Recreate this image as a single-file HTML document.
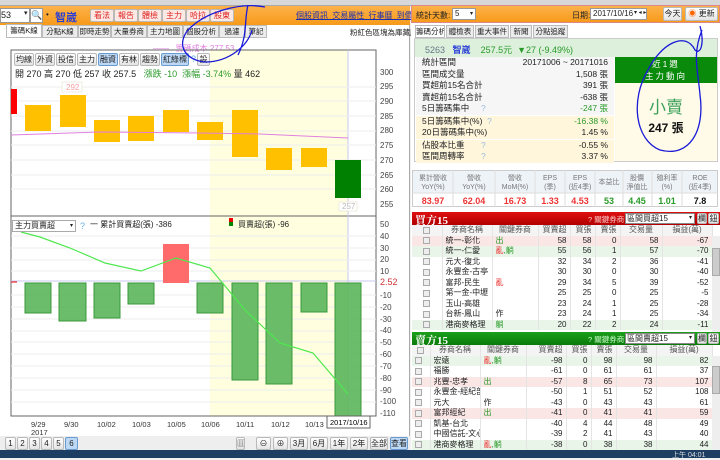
<!DOCTYPE html>
<html><head><meta charset="utf-8"><style>
*{margin:0;padding:0;box-sizing:border-box}
body{width:720px;height:458px;overflow:hidden;background:#f0f0f0;font-family:"Liberation Sans","Noto Sans CJK TC",sans-serif;font-size:9px;color:#222;position:relative}
.a{position:absolute;white-space:nowrap}
.btn{position:absolute;height:13px;border:1px solid #b9b9b9;background:linear-gradient(#fff,#e4e4e4);font-size:8px;line-height:11px;text-align:center;border-radius:2px;white-space:nowrap;overflow:hidden}
.tab{position:absolute;top:25px;height:13px;border:1px solid #bbb;background:#ececec;font-size:7.5px;line-height:11px;text-align:center;white-space:nowrap;overflow:hidden}
table{border-collapse:collapse}
.t td{height:10.5px;font-size:8px;line-height:10px;padding:0 3px;border-right:1px solid #e4e4e4;overflow:hidden;white-space:nowrap}
.r{text-align:right}
.cb{display:inline-block;width:7px;height:7px;border:1px solid #aaa;background:#eee;vertical-align:middle}
.g{color:#2a9a2a}.rd{color:#e33}
</style></head><body>
<div class="a" style="left:0;top:0;width:720px;height:6px;background:#d8d8d8;border-bottom:1px solid #aaa"></div>
<div class="a" style="left:0;top:6px;width:410px;height:19px;background:linear-gradient(#fdb24a,#f79a1a)"></div>
<div class="a" style="left:0;top:8px;width:30px;height:15px;background:#fff;border:1px solid #999;font-size:9px;line-height:13px">53</div>
<div class="a" style="left:24px;top:9px;font-size:7px">▾</div>
<div class="a" style="left:30px;top:8px;width:13px;height:15px;background:#fff;border:1px solid #999;font-size:9px;line-height:13px;text-align:center">🔍</div>
<div class="a" style="left:46px;top:10px;font-size:8px">•</div>
<div class="a" style="left:55px;top:9px;font-size:11px;font-weight:bold;color:#2a3fd6">智崴</div>
<div class="btn" style="left:90px;top:9px;width:24px;color:#d22;background:#fde9e4">看法</div>
<div class="btn" style="left:114px;top:9px;width:24px;color:#d22;background:#fde9e4">報告</div>
<div class="btn" style="left:138px;top:9px;width:24px;color:#d22;background:#fde9e4">體檢</div>
<div class="btn" style="left:162px;top:9px;width:24px;color:#d22;background:#fde9e4">主力</div>
<div class="btn" style="left:186px;top:9px;width:24px;color:#d22;background:#fde9e4">哈拉</div>
<div class="btn" style="left:210px;top:9px;width:24px;color:#d22;background:#fde9e4">股東</div>
<div class="a" style="left:296px;top:10px;font-size:8px;color:#1c2fb0;text-decoration:underline;word-spacing:2px">個股資訊 交易屬性 行事曆 到價通知</div>
<div class="a" style="left:0;top:25px;width:410px;height:425px;background:#fff;border-right:1px solid #aaa"></div>
<div class="tab" style="left:6px;width:36px;background:#fff;top:24px;height:14px">籌碼K線</div>
<div class="tab" style="left:42px;width:36px">分點K線</div>
<div class="tab" style="left:78px;width:33px">即時走勢</div>
<div class="tab" style="left:111px;width:36px">大量券商</div>
<div class="tab" style="left:147px;width:36px">主力地圖</div>
<div class="tab" style="left:183px;width:36px">個股分析</div>
<div class="tab" style="left:219px;width:26px">過濾</div>
<div class="tab" style="left:245px;width:22px">筆記</div>
<div class="a" style="left:350px;top:27px;font-size:7.5px">粉紅色區塊為庫藏股</div>
<div class="a" style="left:153px;top:43px;font-size:8px;color:#e07ee0">——&nbsp;&nbsp; 籌碼成本 277.53</div>
<svg class="a" style="left:0;top:0" width="410" height="450" font-family="Liberation Sans" font-size="8">
<rect x="210" y="50" width="138" height="366" fill="#ffffe0"/>
<rect x="11" y="50" width="365" height="366" fill="none" stroke="#666"/>
<line x1="11" y1="216" x2="376" y2="216" stroke="#666"/>
<line x1="348" y1="50" x2="348" y2="416" stroke="#c8c8f0"/>
<g stroke="#eee">
<line x1="11" y1="87" x2="376" y2="87"/><line x1="11" y1="101" x2="376" y2="101"/><line x1="11" y1="116" x2="376" y2="116"/><line x1="11" y1="131" x2="376" y2="131"/><line x1="11" y1="145" x2="376" y2="145"/><line x1="11" y1="160" x2="376" y2="160"/><line x1="11" y1="175" x2="376" y2="175"/><line x1="11" y1="189" x2="376" y2="189"/>
<line x1="11" y1="236" x2="376" y2="236"/><line x1="11" y1="248" x2="376" y2="248"/><line x1="11" y1="260" x2="376" y2="260"/><line x1="11" y1="271" x2="376" y2="271"/><line x1="11" y1="295" x2="376" y2="295"/><line x1="11" y1="307" x2="376" y2="307"/><line x1="11" y1="319" x2="376" y2="319"/><line x1="11" y1="331" x2="376" y2="331"/><line x1="11" y1="342" x2="376" y2="342"/><line x1="11" y1="354" x2="376" y2="354"/><line x1="11" y1="366" x2="376" y2="366"/><line x1="11" y1="378" x2="376" y2="378"/><line x1="11" y1="390" x2="376" y2="390"/><line x1="11" y1="402" x2="376" y2="402"/>
</g>
<line x1="11" y1="281" x2="376" y2="281" stroke="#c8c8f0"/>
<line x1="11" y1="282" x2="17" y2="282" stroke="#e00"/>
<rect x="11" y="89" width="6" height="25" fill="#f00"/>
<g fill="#ffc000">
<rect x="25" y="105" width="26" height="26"/><rect x="60" y="95" width="26" height="32"/><rect x="94" y="120" width="26" height="22"/><rect x="128" y="116" width="26" height="25"/><rect x="163" y="110" width="26" height="22"/><rect x="197" y="122" width="26" height="18"/><rect x="232" y="110" width="26" height="47"/><rect x="266" y="148" width="26" height="22"/><rect x="301" y="148" width="26" height="19"/>
</g>
<rect x="335" y="160" width="26" height="38" fill="#008000"/>
<polyline points="11,135 100,132 200,133 260,134 348,138" fill="none" stroke="#e080e0"/>
<rect x="62" y="82" width="20" height="10" fill="#fff" stroke="#eed"/><text x="66" y="90" fill="#f8a0a0">292</text>
<rect x="339" y="202" width="18" height="9" fill="#fff" stroke="#eed"/><text x="342" y="209" fill="#bbb">257</text>
<g fill="#5bb55b" fill-opacity=".9" stroke="#3a9a3a">
<rect x="25" y="283" width="26" height="30"/><rect x="59" y="283" width="27" height="38"/><rect x="94" y="283" width="26" height="35"/><rect x="128" y="283" width="26" height="21"/><rect x="197" y="283" width="26" height="30"/><rect x="232" y="283" width="26" height="97"/><rect x="266" y="283" width="26" height="101"/><rect x="301" y="283" width="26" height="29"/><rect x="335" y="283" width="26" height="133"/>
</g>
<rect x="163" y="244" width="26" height="39" fill="#ff6b6b"/>
<polyline points="21,232 40,237 70,248 105,263 141,271 176,258 210,268 245,310 280,343 313,353 348,394" fill="none" stroke="#4ee84e" stroke-width="1.2"/>
<g fill="#444">
<text x="380" y="75">300</text><text x="380" y="89">295</text><text x="380" y="104">290</text><text x="380" y="119">285</text><text x="380" y="133">280</text><text x="380" y="148">275</text><text x="380" y="163">270</text><text x="380" y="178">265</text><text x="380" y="192">260</text><text x="380" y="207">255</text>
<text x="380" y="227">50</text><text x="380" y="239">40</text><text x="380" y="251">30</text><text x="380" y="262">20</text><text x="380" y="274">10</text>
<text x="380" y="298">-10</text><text x="380" y="310">-20</text><text x="380" y="322">-30</text><text x="380" y="333">-40</text><text x="380" y="345">-50</text><text x="380" y="357">-60</text><text x="380" y="369">-70</text><text x="380" y="381">-80</text><text x="380" y="393">-90</text><text x="380" y="404">-100</text><text x="380" y="416">-110</text>
</g>
<text x="380" y="285" fill="#c33" font-size="9">2.52</text>
<g fill="#333" font-size="7.5">
<text x="31" y="427">9/29</text><text x="31" y="435">2017</text><text x="64" y="427">9/30</text><text x="97" y="427">10/02</text><text x="132" y="427">10/03</text><text x="167" y="427">10/05</text><text x="201" y="427">10/06</text><text x="236" y="427">10/11</text><text x="271" y="427">10/12</text><text x="305" y="427">10/13</text>
</g>
<rect x="327" y="416" width="43" height="12" fill="#fff" stroke="#666"/><text x="330" y="425" font-size="7.5">2017/10/16</text>
</svg>
<div class="btn" style="left:14px;top:53px;width:20px">均線</div>
<div class="btn" style="left:35px;top:53px;width:20px">外資</div>
<div class="btn" style="left:56px;top:53px;width:20px">投信</div>
<div class="btn" style="left:77px;top:53px;width:20px">主力</div>
<div class="btn" style="left:98px;top:53px;width:20px;background:#bcd8f5;border-color:#6a9bd0">融資</div>
<div class="btn" style="left:119px;top:53px;width:20px">有林</div>
<div class="btn" style="left:140px;top:53px;width:20px">趨勢</div>
<div class="btn" style="left:161px;top:53px;width:28px;background:#bcd8f5;border-color:#6a9bd0">紅綠標</div>
<div class="a" style="left:191px;top:54px;color:#6ab0e0">?</div>
<div class="btn" style="left:197px;top:53px;width:13px">設</div>
<div class="a" style="left:15px;top:67px;font-size:9px">開 270 高 270 低 257 收 257.5 &nbsp; <span class="g">漲跌 -10 &nbsp;漲幅 -3.74%</span> 量 462</div>
<div class="a" style="left:12px;top:220px;width:64px;height:12px;border:1px solid #aaa;background:#fff;font-size:8px;line-height:10px;padding-left:2px">主力買賣超<span style="position:absolute;right:2px;font-size:6px">▾</span></div>
<div class="a" style="left:80px;top:221px;color:#6ab0e0">?</div>
<div class="a" style="left:90px;top:219px;font-size:8px">一 累計買賣超(張) -386</div>
<div class="a" style="left:229px;top:218px;width:4px;height:8px;background:linear-gradient(#e00 50%,#080 50%)"></div>
<div class="a" style="left:238px;top:219px;font-size:8px">買賣超(張) -96</div>
<div class="a" style="left:0;top:436px;width:410px;height:14px;background:#eee"></div>
<div class="btn" style="left:5px;top:437px;width:11px">1</div><div class="btn" style="left:17px;top:437px;width:11px">2</div><div class="btn" style="left:29px;top:437px;width:11px">3</div><div class="btn" style="left:41px;top:437px;width:11px">4</div><div class="btn" style="left:53px;top:437px;width:11px">5</div><div class="btn" style="left:65px;top:437px;width:13px;background:#bcd8f5;border-color:#6a9bd0">6</div>
<div class="btn" style="left:236px;top:437px;width:9px">▥</div>
<div class="btn" style="left:256px;top:437px;width:15px">⊖</div><div class="btn" style="left:273px;top:437px;width:15px">⊕</div>
<div class="btn" style="left:290px;top:437px;width:18px">3月</div><div class="btn" style="left:310px;top:437px;width:18px">6月</div><div class="btn" style="left:330px;top:437px;width:18px">1年</div><div class="btn" style="left:350px;top:437px;width:18px">2年</div><div class="btn" style="left:370px;top:437px;width:18px">全部</div><div class="btn" style="left:390px;top:437px;width:18px;background:#bcd8f5;border-color:#6a9bd0">查看</div>
<div class="a" style="left:411px;top:5px;width:309px;height:18px;background:linear-gradient(#fdb24a,#f79a1a);border:1px solid #d88"></div>
<div class="a" style="left:416px;top:10px;font-size:8px">統計天數:</div>
<div class="a" style="left:452px;top:8px;width:24px;height:12px;background:#fff;border:1px solid #999;font-size:8px;line-height:10px;padding-left:2px">5<span style="position:absolute;right:2px;font-size:6px">▾</span></div>
<div class="a" style="left:572px;top:10px;font-size:8px">日期:</div>
<div class="a" style="left:590px;top:8px;width:57px;height:12px;background:#fff;border:1px solid #999;font-size:8px;line-height:10px;padding-left:2px">2017/10/16</div>
<div class="a" style="left:634px;top:9px;font-size:6px">▾ ◂ ▸</div>
<div class="btn" style="left:663px;top:7px;width:19px;height:14px">今天</div>
<div class="btn" style="left:685px;top:7px;width:33px;height:14px"><span style="color:#f60">◉</span> 更新</div>
<div class="a" style="left:411px;top:23px;width:309px;height:427px;background:#fff"></div>
<div class="tab" style="left:415px;width:30px;background:#fff">籌碼分析</div>
<div class="tab" style="left:446px;width:28px">體檢表</div>
<div class="tab" style="left:475px;width:34px">重大事件</div>
<div class="tab" style="left:510px;width:22px">新聞</div>
<div class="tab" style="left:533px;width:35px">分點追蹤</div>
<div class="a" style="left:414px;top:38px;width:304px;height:124px;border:1px solid #ccc"></div>
<div class="a" style="left:415px;top:39px;width:302px;height:18px;background:#dcf0dc"></div>
<div class="a" style="left:425px;top:43px;font-size:9px;color:#678">5263 &nbsp; <b style="color:#2a3fd6">智崴</b> &nbsp;&nbsp; <span class="g">257.5元 &nbsp;▼27 (-9.49%)</span></div>
<div class="a" style="left:416px;top:57px;width:198px;height:104px;font-size:8.5px;line-height:11.5px">
<div style="background:#f6f6f6;padding:0 6px">統計區間<span style="float:right">20171006 ~ 20171016</span></div>
<div style="background:#f6f6f6;padding:0 6px">區間成交量<span style="float:right">1,508 張</span></div>
<div style="background:#f6f6f6;padding:0 6px">買超前15名合計<span style="float:right">391 張</span></div>
<div style="background:#f6f6f6;padding:0 6px">賣超前15名合計<span style="float:right">-638 張</span></div>
<div style="background:#f6f6f6;padding:0 6px">5日籌碼集中 <span style="color:#9bd">&nbsp;&nbsp;&nbsp;&nbsp;?</span><span style="float:right" class="g">-247 張</span></div>
<div style="background:#fff6dc;padding:0 6px;margin-top:1px">5日籌碼集中(%) <span style="color:#9bd">&nbsp;?</span><span style="float:right" class="g">-16.38 %</span></div>
<div style="background:#fff6dc;padding:0 6px">20日籌碼集中(%)<span style="float:right">1.45 %</span></div>
<div style="background:#fff6dc;padding:0 6px;margin-top:1px">佔股本比重 <span style="color:#9bd">&nbsp;&nbsp;&nbsp;&nbsp;&nbsp;&nbsp;?</span><span style="float:right">-0.55 %</span></div>
<div style="background:#fff6dc;padding:0 6px">區間周轉率 <span style="color:#9bd">&nbsp;&nbsp;&nbsp;&nbsp;&nbsp;&nbsp;?</span><span style="float:right">3.37 %</span></div>
</div>
<div class="a" style="left:615px;top:57px;width:102px;height:26px;background:#0a8a0a;color:#fff;font-size:8.5px;text-align:center;line-height:12px;padding-top:1px;letter-spacing:2px">近1週<br>主力動向</div>
<div class="a" style="left:615px;top:83px;width:102px;height:78px;background:#fffbe8;text-align:center">
<div style="font-size:17px;color:#3aa05a;margin-top:10px">小賣</div>
<div style="font-size:12px;font-weight:bold;color:#111;margin-top:1px">247 張</div></div>
<div class="a" style="left:412px;top:170px;width:306px;height:37px;border:1px solid #ccc;background:#fff"></div>
<div class="a" style="left:413px;top:171px;width:304px;height:22px;background:#eef3f8"></div>
<svg class="a" style="left:412px;top:170px" width="308" height="38" font-family="Liberation Sans,Noto Sans CJK TC" font-size="7" text-anchor="middle">
<g stroke="#ddd"><line x1="41" y1="0" x2="41" y2="37"/><line x1="83" y1="0" x2="83" y2="37"/><line x1="123" y1="0" x2="123" y2="37"/><line x1="153" y1="0" x2="153" y2="37"/><line x1="183" y1="0" x2="183" y2="37"/><line x1="211" y1="0" x2="211" y2="37"/><line x1="240" y1="0" x2="240" y2="37"/><line x1="270" y1="0" x2="270" y2="37"/><line x1="0" y1="23" x2="306" y2="23"/></g>
<g fill="#777"><text x="21" y="10">累計營收</text><text x="21" y="19">YoY(%)</text><text x="62" y="10">營收</text><text x="62" y="19">YoY(%)</text><text x="103" y="10">營收</text><text x="103" y="19">MoM(%)</text><text x="138" y="10">EPS</text><text x="138" y="19">(季)</text><text x="168" y="10">EPS</text><text x="168" y="19">(近4季)</text><text x="197" y="14">本益比</text><text x="225" y="10">股價</text><text x="225" y="19">淨值比</text><text x="255" y="10">殖利率</text><text x="255" y="19">(%)</text><text x="288" y="10">ROE</text><text x="288" y="19">(近4季)</text></g>
<g font-size="9" font-weight="bold"><text x="21" y="34" fill="#e33">83.97</text><text x="62" y="34" fill="#e33">62.04</text><text x="103" y="34" fill="#e33">16.73</text><text x="138" y="34" fill="#e33">1.33</text><text x="168" y="34" fill="#e33">4.53</text><text x="197" y="34" fill="#2a9a2a">53</text><text x="225" y="34" fill="#2a9a2a">4.45</text><text x="255" y="34" fill="#2a9a2a">1.01</text><text x="288" y="34" fill="#111">7.8</text></g>
</svg>
<div class="a" style="left:412px;top:212px;width:308px;height:13px;background:linear-gradient(#e01010,#b00000)"></div>
<div class="a" style="left:415px;top:212px;color:#fff;font-weight:bold;font-size:11px;font-family:'Liberation Serif','Noto Serif CJK SC',serif">買方15</div>
<div class="a" style="left:588px;top:214px;color:#fcc;font-size:7.5px">? 關鍵券商:</div>
<div class="a" style="left:625px;top:213px;width:70px;height:11px;background:#fff;border:1px solid #888;font-size:8px;line-height:9px;padding-left:1px">區間買超15<span style="position:absolute;right:2px;font-size:6px">▾</span></div>
<div class="btn" style="left:697px;top:213px;width:10px;height:11px;line-height:9px">欄</div><div class="btn" style="left:708px;top:213px;width:11px;height:11px;line-height:9px">鈕</div>
<table class="t a" style="left:412px;top:225px;width:300px;table-layout:fixed">
<colgroup><col style="width:30px"><col style="width:50px"><col style="width:46px"><col style="width:32px"><col style="width:25px"><col style="width:25px"><col style="width:42px"><col style="width:50px"></colgroup>
<tr style="background:#f4f4f4;color:#555"><td style="text-align:center"><span class="cb"></span></td><td style="text-align:center">券商名稱</td><td style="text-align:center">關鍵券商</td><td class="r">買賣超</td><td class="r">買張</td><td class="r">賣張</td><td style="text-align:center">交易量</td><td style="text-align:center">損益(萬)</td></tr>
<tr style="background:#fbe6e6"><td style="text-align:center"><span class="cb"></span></td><td>統一-彰化</td><td class="g">出</td><td class="r">58</td><td class="r">58</td><td class="r">0</td><td class="r">58</td><td class="r">-67</td></tr>
<tr style="background:#e9f5e9"><td style="text-align:center"><span class="cb"></span></td><td>統一-仁愛</td><td><span class="rd">亂</span><span class="g">,躺</span></td><td class="r">55</td><td class="r">56</td><td class="r">1</td><td class="r">57</td><td class="r">-70</td></tr>
<tr><td style="text-align:center"><span class="cb"></span></td><td>元大-復北</td><td></td><td class="r">32</td><td class="r">34</td><td class="r">2</td><td class="r">36</td><td class="r">-41</td></tr>
<tr><td style="text-align:center"><span class="cb"></span></td><td>永豐金-古亭</td><td></td><td class="r">30</td><td class="r">30</td><td class="r">0</td><td class="r">30</td><td class="r">-40</td></tr>
<tr><td style="text-align:center"><span class="cb"></span></td><td>富邦-民生</td><td class="rd">亂</td><td class="r">29</td><td class="r">34</td><td class="r">5</td><td class="r">39</td><td class="r">-52</td></tr>
<tr><td style="text-align:center"><span class="cb"></span></td><td>第一金-中壢</td><td></td><td class="r">25</td><td class="r">25</td><td class="r">0</td><td class="r">25</td><td class="r">-5</td></tr>
<tr><td style="text-align:center"><span class="cb"></span></td><td>玉山-高雄</td><td></td><td class="r">23</td><td class="r">24</td><td class="r">1</td><td class="r">25</td><td class="r">-28</td></tr>
<tr><td style="text-align:center"><span class="cb"></span></td><td>台新-鳳山</td><td>作</td><td class="r">23</td><td class="r">24</td><td class="r">1</td><td class="r">25</td><td class="r">-34</td></tr>
<tr style="background:#e9f5e9"><td style="text-align:center"><span class="cb"></span></td><td>港商麥格理</td><td class="g">躺</td><td class="r">20</td><td class="r">22</td><td class="r">2</td><td class="r">24</td><td class="r">-11</td></tr>
</table>
<div class="a" style="left:712px;top:236px;width:8px;height:96px;background:#eee"><div style="margin-top:12px;height:28px;background:#ccc;border:1px solid #aaa"></div></div>
<div class="a" style="left:412px;top:332px;width:308px;height:13px;background:linear-gradient(#1aa01a,#0a7a0a)"></div>
<div class="a" style="left:415px;top:332px;color:#fff;font-weight:bold;font-size:11px;font-family:'Liberation Serif','Noto Serif CJK SC',serif">賣方15</div>
<div class="a" style="left:588px;top:334px;color:#cfc;font-size:7.5px">? 關鍵券商:</div>
<div class="a" style="left:625px;top:333px;width:70px;height:11px;background:#fff;border:1px solid #888;font-size:8px;line-height:9px;padding-left:1px">區間賣超15<span style="position:absolute;right:2px;font-size:6px">▾</span></div>
<div class="btn" style="left:697px;top:333px;width:10px;height:11px;line-height:9px">欄</div><div class="btn" style="left:708px;top:333px;width:11px;height:11px;line-height:9px">鈕</div>
<table class="t a" style="left:412px;top:345px;width:300px;table-layout:fixed">
<colgroup><col style="width:18px"><col style="width:50px"><col style="width:46px"><col style="width:40px"><col style="width:25px"><col style="width:25px"><col style="width:40px"><col style="width:56px"></colgroup>
<tr style="background:#f4f4f4;color:#555"><td style="text-align:center"><span class="cb"></span></td><td style="text-align:center">券商名稱</td><td style="text-align:center">關鍵券商</td><td class="r">買賣超</td><td class="r">買張</td><td class="r">賣張</td><td style="text-align:center">交易量</td><td style="text-align:center">損益(萬)</td></tr>
<tr style="background:#e9f5e9"><td><span class="cb"></span></td><td>宏遠</td><td><span class="rd">亂</span><span class="g">,躺</span></td><td class="r">-98</td><td class="r">0</td><td class="r">98</td><td class="r">98</td><td class="r">82</td></tr>
<tr><td><span class="cb"></span></td><td>福勝</td><td></td><td class="r">-61</td><td class="r">0</td><td class="r">61</td><td class="r">61</td><td class="r">37</td></tr>
<tr style="background:#fbe6e6"><td><span class="cb"></span></td><td>兆豐-忠孝</td><td class="g">出</td><td class="r">-57</td><td class="r">8</td><td class="r">65</td><td class="r">73</td><td class="r">107</td></tr>
<tr><td><span class="cb"></span></td><td>永豐金-經紀部</td><td></td><td class="r">-50</td><td class="r">1</td><td class="r">51</td><td class="r">52</td><td class="r">108</td></tr>
<tr><td><span class="cb"></span></td><td>元大</td><td>作</td><td class="r">-43</td><td class="r">0</td><td class="r">43</td><td class="r">43</td><td class="r">61</td></tr>
<tr style="background:#fbe6e6"><td><span class="cb"></span></td><td>富邦經紀</td><td class="g">出</td><td class="r">-41</td><td class="r">0</td><td class="r">41</td><td class="r">41</td><td class="r">59</td></tr>
<tr><td><span class="cb"></span></td><td>凱基-台北</td><td></td><td class="r">-40</td><td class="r">4</td><td class="r">44</td><td class="r">48</td><td class="r">49</td></tr>
<tr><td><span class="cb"></span></td><td>中國信託-文心</td><td></td><td class="r">-39</td><td class="r">2</td><td class="r">41</td><td class="r">43</td><td class="r">40</td></tr>
<tr style="background:#e9f5e9"><td><span class="cb"></span></td><td>港商麥格理</td><td><span class="rd">亂</span><span class="g">,躺</span></td><td class="r">-38</td><td class="r">0</td><td class="r">38</td><td class="r">38</td><td class="r">44</td></tr>
</table>
<div class="a" style="left:712px;top:356px;width:8px;height:94px;background:#eee"><div style="margin-top:10px;height:28px;background:#ccc;border:1px solid #aaa"></div></div>
<div class="a" style="left:0;top:450px;width:720px;height:8px;background:#1d3d63"></div>
<div class="a" style="left:672px;top:450px;font-size:7px;color:#ddd">上午 04:01</div>
<svg class="a" style="left:0;top:0" width="720" height="458" fill="none" stroke="#1a1ad8" stroke-width="1.3">
<path d="M248 5 C244 20 248 35 238 55 M265 7 C240 2 205 12 188 30 C176 45 185 60 205 62 C230 62 248 45 252 30"/>
<path d="M700 26 C705 45 700 55 695 50 C685 30 660 45 648 70 C630 100 635 140 660 150 C690 158 705 130 700 95 C698 70 692 55 702 30"/>
</svg>
</body></html>
